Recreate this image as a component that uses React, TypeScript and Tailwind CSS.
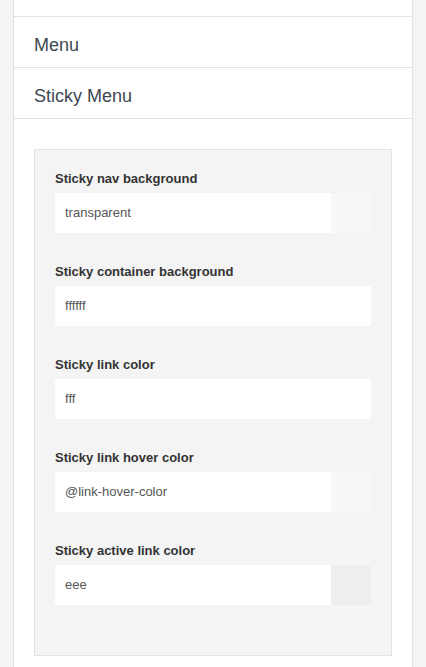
const fields = [
  { label: "Sticky nav background", value: "transparent", swatch: "bg-[#f8f8f8]" },
  { label: "Sticky container background", value: "ffffff", swatch: "bg-white" },
  { label: "Sticky link color", value: "fff", swatch: "bg-white" },
  { label: "Sticky link hover color", value: "@link-hover-color", swatch: "bg-[#f8f8f8]" },
  { label: "Sticky active link color", value: "eee", swatch: "bg-[#eeeeee]" },
];

const ColorField = ({
  label,
  value,
  swatch,
}: {
  label: string;
  value: string;
  swatch: string;
}) => (
  <div className="mb-[30px]">
    <label className="mb-[6px] block text-[13px] font-bold leading-[17px] text-[#333]">
      {label}
    </label>
    <div className="flex h-10 overflow-hidden rounded-[3px] bg-white">
      <input
        readOnly
        value={value}
        className="min-w-0 flex-1 bg-white px-2.5 text-[13px] text-[#555] outline-none"
      />
      <span className={`w-10 ${swatch}`} />
    </div>
  </div>
);

export default function App() {
  return (
    <div className="min-h-screen bg-[#f4f4f4] px-[13px] font-['Liberation_Sans',Arial,sans-serif]">
      <div className="min-h-screen border-x border-[#e3e3e3] bg-white">
        <div className="h-[17px] border-b border-[#e3e3e3]" />
        <div className="h-[51px] border-b border-[#e3e3e3] px-5 pt-[15px] text-[18px] text-[#3e4852]">
          Menu
        </div>
        <div className="h-[51px] border-b border-[#e3e3e3] px-5 pt-[15px] text-[18px] text-[#3e4852]">
          Sticky Menu
        </div>
        <div className="px-5 pt-[30px]">
          <div className="border border-[#e3e3e3] bg-[#f4f4f4] p-5">
            {fields.map((f) => (
              <ColorField key={f.label} {...f} />
            ))}
          </div>
        </div>
      </div>
    </div>
  );
}
